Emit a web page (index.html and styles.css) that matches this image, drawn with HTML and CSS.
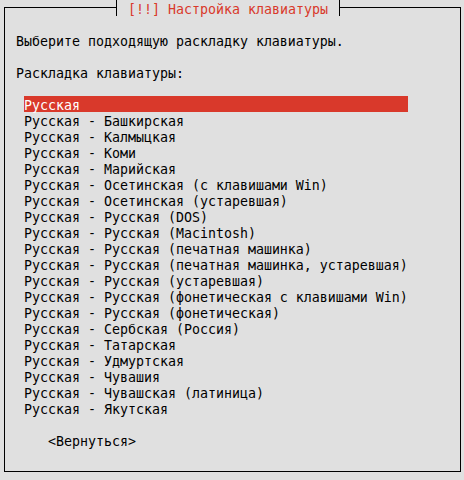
FILE: index.html
```html
<!DOCTYPE html>
<html lang="ru">
<head>
  <meta charset="UTF-8">
  <meta name="viewport" content="width=device-width, initial-scale=1.0">
  <title>Настройка клавиатуры</title>
  <link rel="stylesheet" href="styles.css">
</head>
<body>
  <div class="dialog">
    <div class="dialog-title">[!!] Настройка клавиатуры</div>
    <p class="line">Выберите подходящую раскладку клавиатуры.</p>
    <p class="line">Раскладка клавиатуры:</p>
    <ul class="layouts">
      <li class="selected">Русская</li>
      <li>Русская - Башкирская</li>
      <li>Русская - Калмыцкая</li>
      <li>Русская - Коми</li>
      <li>Русская - Марийская</li>
      <li>Русская - Осетинская (с клавишами Win)</li>
      <li>Русская - Осетинская (устаревшая)</li>
      <li>Русская - Русская (DOS)</li>
      <li>Русская - Русская (Macintosh)</li>
      <li>Русская - Русская (печатная машинка)</li>
      <li>Русская - Русская (печатная машинка, устаревшая)</li>
      <li>Русская - Русская (устаревшая)</li>
      <li>Русская - Русская (фонетическая с клавишами Win)</li>
      <li>Русская - Русская (фонетическая)</li>
      <li>Русская - Сербская (Россия)</li>
      <li>Русская - Татарская</li>
      <li>Русская - Удмуртская</li>
      <li>Русская - Чувашия</li>
      <li>Русская - Чувашская (латиница)</li>
      <li>Русская - Якутская</li>
    </ul>
    <div class="line back-btn">&lt;Вернуться&gt;</div>
  </div>
</body>
</html>
```

FILE: styles.css
```css
body {
  margin: 0;
  padding: 7px 0 0 4px;
  background-color: #e0e0e0;
  font-family: "DejaVu Sans Mono", monospace;
  font-size: 13.29px;
  line-height: 16px;
  color: #000;
}

.dialog {
  position: relative;
  box-sizing: border-box;
  width: 457px;
  height: 465px;
  border: 1px solid #000;
  padding: 24px 0 0 11px;
}

/* every text row sits in a 16px cell, glyphs pushed 2px down */
.dialog-title,
.line,
.layouts li {
  box-sizing: border-box;
  height: 16px;
  padding-top: 2px;
  white-space: pre;
}

.dialog-title {
  position: absolute;
  top: -8px;
  left: 111px;
  padding-left: 11px;
  padding-right: 11px;
  border-left: 1px solid #000;
  border-right: 1px solid #000;
  background-color: #e0e0e0;
  color: #d9392b;
}

.line {
  margin: 0 0 16px 0;
}

.layouts {
  list-style: none;
  margin: 0 0 16px 8px;
  padding: 0;
  width: 384px;
}

.layouts li.selected {
  background-color: #d9392b;
  color: #fff;
}

.back-btn {
  margin-left: 32px;
}
```
